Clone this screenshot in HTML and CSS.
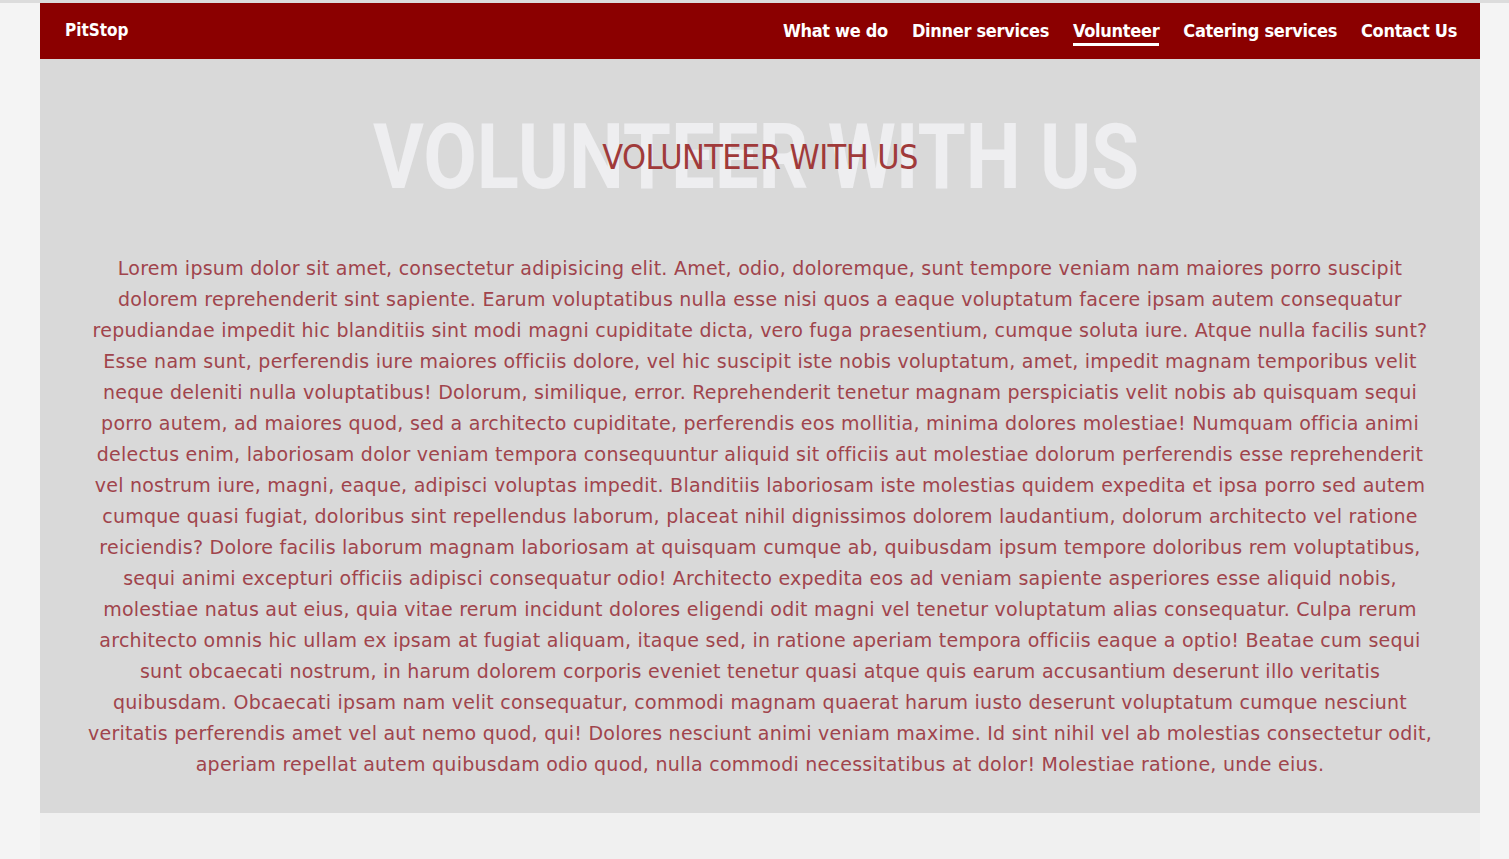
FILE: index.html
```html
<!DOCTYPE html>
<html lang="en">
<head>
<meta charset="utf-8">
<title>PitStop - Volunteer</title>
<link rel="stylesheet" href="styles.css">
</head>
<body>
<div class="page">
  <header class="nav">
    <a class="brand" href="#">PitStop</a>
    <nav class="links">
      <a href="#">What we do</a>
      <a href="#">Dinner services</a>
      <a href="#" class="active">Volunteer</a>
      <a href="#">Catering services</a>
      <a href="#">Contact Us</a>
    </nav>
  </header>
  <section class="volunteer">
    <div class="title">
      <span class="ghost" aria-hidden="true">VOLUNTEER WITH US</span>
      <h1>VOLUNTEER WITH US</h1>
    </div>
    <p>Lorem ipsum dolor sit amet, consectetur adipisicing elit. Amet, odio, doloremque, sunt tempore veniam nam maiores porro suscipit dolorem reprehenderit sint sapiente. Earum voluptatibus nulla esse nisi quos a eaque voluptatum facere ipsam autem consequatur repudiandae impedit hic blanditiis sint modi magni cupiditate dicta, vero fuga praesentium, cumque soluta iure. Atque nulla facilis sunt? Esse nam sunt, perferendis iure maiores officiis dolore, vel hic suscipit iste nobis voluptatum, amet, impedit magnam temporibus velit neque deleniti nulla voluptatibus! Dolorum, similique, error. Reprehenderit tenetur magnam perspiciatis velit nobis ab quisquam sequi porro autem, ad maiores quod, sed a architecto cupiditate, perferendis eos mollitia, minima dolores molestiae! Numquam officia animi delectus enim, laboriosam dolor veniam tempora consequuntur aliquid sit officiis aut molestiae dolorum perferendis esse reprehenderit vel nostrum iure, magni, eaque, adipisci voluptas impedit. Blanditiis laboriosam iste molestias quidem expedita et ipsa porro sed autem cumque quasi fugiat, doloribus sint repellendus laborum, placeat nihil dignissimos dolorem laudantium, dolorum architecto vel ratione reiciendis? Dolore facilis laborum magnam laboriosam at quisquam cumque ab, quibusdam ipsum tempore doloribus rem voluptatibus, sequi animi excepturi officiis adipisci consequatur odio! Architecto expedita eos ad veniam sapiente asperiores esse aliquid nobis, molestiae natus aut eius, quia vitae rerum incidunt dolores eligendi odit magni vel tenetur voluptatum alias consequatur. Culpa rerum architecto omnis hic ullam ex ipsam at fugiat aliquam, itaque sed, in ratione aperiam tempora officiis eaque a optio! Beatae cum sequi sunt obcaecati nostrum, in harum dolorem corporis eveniet tenetur quasi atque quis earum accusantium deserunt illo veritatis quibusdam. Obcaecati ipsam nam velit consequatur, commodi magnam quaerat harum iusto deserunt voluptatum cumque nesciunt veritatis perferendis amet vel aut nemo quod, qui! Dolores nesciunt animi veniam maxime. Id sint nihil vel ab molestias consectetur odit, aperiam repellat autem quibusdam odio quod, nulla commodi necessitatibus at dolor! Molestiae ratione, unde eius.</p>
  </section>
  <div class="after"></div>
</div>
</body>
</html>
```
FILE: styles.css
```css
html, body {
  margin: 0;
  padding: 0;
}
body {
  background: #f4f4f4;
  border-top: 3px solid #dcdcdc;
  min-height: 856px;
}
.page {
  width: 1440px;
  margin-left: 40px;
  background: #f0f0f0;
  min-height: 856px;
}
.nav {
  height: 56px;
  box-sizing: border-box;
  padding: 0 23px 2px 25px;
  background: #8b0000;
  display: flex;
  align-items: center;
  justify-content: space-between;
  font-family: "DejaVu Sans Condensed", sans-serif;
  font-weight: bold;
  font-size: 18px;
}
.nav a {
  color: #fff;
  text-decoration: none;
}
.brand {
  font-size: 17px;
}
.links {
  display: flex;
  gap: 24px;
  letter-spacing: -0.3px;
}
.links a {
  position: relative;
}
.links a.active::after {
  content: "";
  position: absolute;
  left: 0;
  right: 0;
  bottom: -5px;
  height: 3px;
  background: #fff;
}
.volunteer {
  background: #d9d9d9;
  padding: 52px 45px 33px;
}
.title {
  position: relative;
  height: 92px;
  display: flex;
  align-items: center;
  justify-content: center;
}
.ghost {
  position: absolute;
  left: 0;
  right: 0;
  top: 50%;
  transform: translate(-4px, -50%) scaleX(0.855);
  text-align: center;
  font-family: Roboto, "Liberation Sans", sans-serif;
  font-weight: bold;
  font-size: 91px;
  color: #eeeef0;
  line-height: 1;
  white-space: nowrap;
}
.title h1 {
  position: relative;
  margin: 0;
  font-family: "DejaVu Sans Condensed", sans-serif;
  font-weight: normal;
  font-size: 34px;
  letter-spacing: -0.6px;
  color: #a03a3a;
}
.volunteer p {
  margin: 50px 0 0;
  text-align: center;
  font-family: "DejaVu Sans", sans-serif;
  font-size: 19px;
  letter-spacing: 0.25px;
  line-height: 31px;
  color: #a0444c;
}
```
